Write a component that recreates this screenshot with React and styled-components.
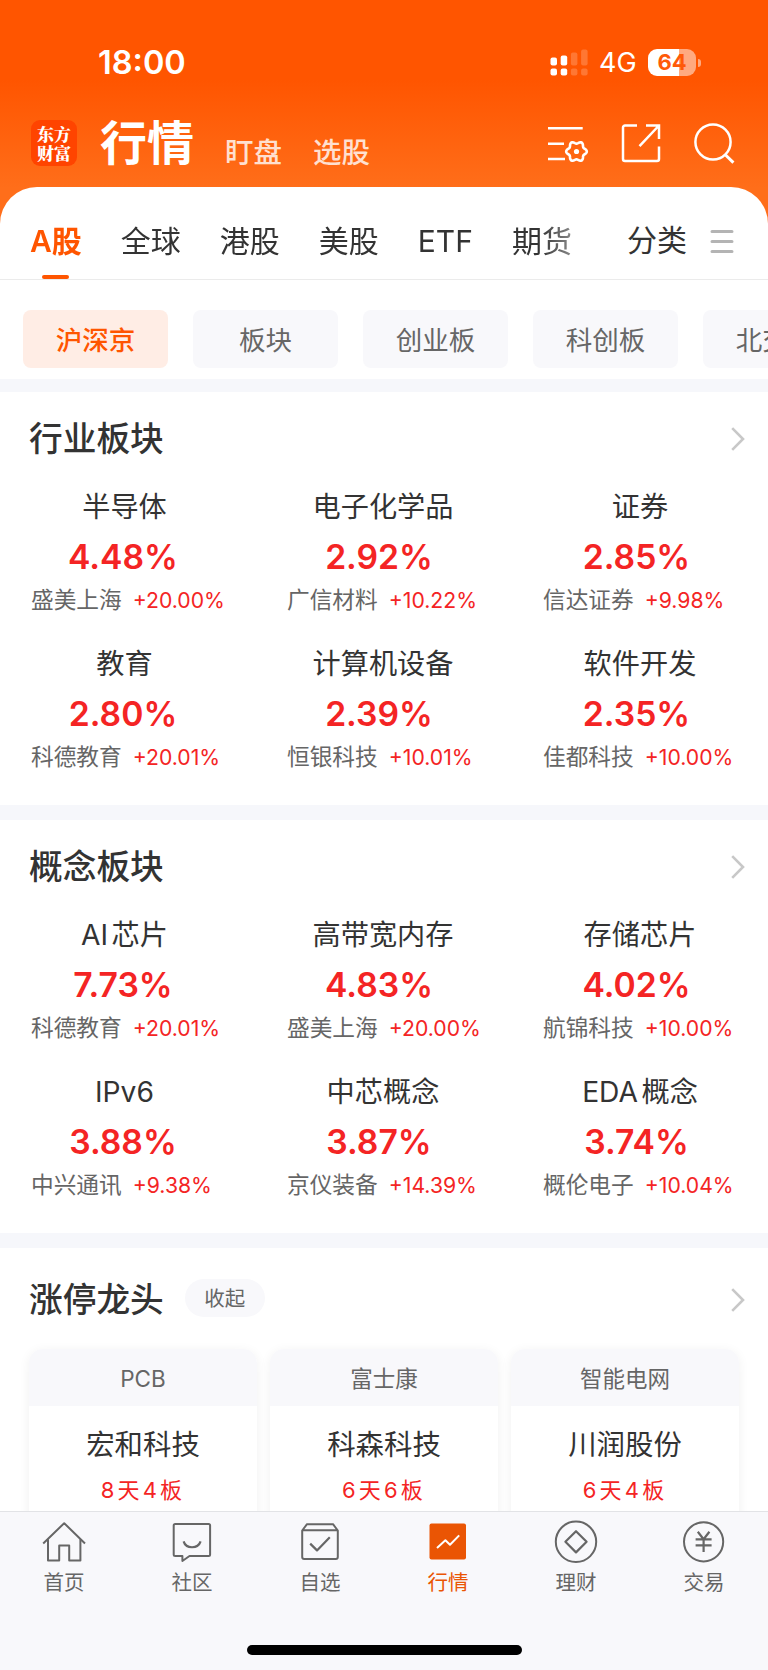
import styled, { createGlobalStyle } from "styled-components";

const industries = [
  { name: "半导体", pct: "4.48%", stock: "盛美上海", change: "+20.00%" },
  { name: "电子化学品", pct: "2.92%", stock: "广信材料", change: "+10.22%" },
  { name: "证券", pct: "2.85%", stock: "信达证券", change: "+9.98%" },
  { name: "教育", pct: "2.80%", stock: "科德教育", change: "+20.01%" },
  { name: "计算机设备", pct: "2.39%", stock: "恒银科技", change: "+10.01%" },
  { name: "软件开发", pct: "2.35%", stock: "佳都科技", change: "+10.00%" },
];

const concepts = [
  { name: "AI芯片", pct: "7.73%", stock: "科德教育", change: "+20.01%" },
  { name: "高带宽内存", pct: "4.83%", stock: "盛美上海", change: "+20.00%" },
  { name: "存储芯片", pct: "4.02%", stock: "航锦科技", change: "+10.00%" },
  { name: "IPv6", pct: "3.88%", stock: "中兴通讯", change: "+9.38%" },
  { name: "中芯概念", pct: "3.87%", stock: "京仪装备", change: "+14.39%" },
  { name: "EDA概念", pct: "3.74%", stock: "概伦电子", change: "+10.04%" },
];

const leaders = [
  { theme: "PCB", stock: "宏和科技", streak: "8天4板" },
  { theme: "富士康", stock: "科森科技", streak: "6天6板" },
  { theme: "智能电网", stock: "川润股份", streak: "6天4板" },
];

const markets = ["A股", "全球", "港股", "美股", "ETF", "期货"];
const boards = ["沪深京", "板块", "创业板", "科创板", "北交所"];

const SignalIcon = () => (
  <svg width="38" height="27" viewBox="0 0 38 27" fill="#fff">
    <rect x="0.5" y="8.5" width="6.5" height="8" rx="2" />
    <rect x="10.7" y="6.5" width="6.5" height="10" rx="2" />
    <rect x="20.9" y="3.5" width="6.5" height="13" rx="2" opacity="0.2" />
    <rect x="31.1" y="0.5" width="6.5" height="16" rx="2" opacity="0.2" />
    <rect x="0.5" y="19.5" width="6.5" height="7" rx="2" />
    <rect x="10.7" y="19.5" width="6.5" height="7" rx="2" />
    <rect x="20.9" y="19.5" width="6.5" height="7" rx="2" opacity="0.2" />
    <rect x="31.1" y="19.5" width="6.5" height="7" rx="2" opacity="0.2" />
  </svg>
);

// six-lobed gear outline
const gear = Array.from({ length: 72 }, (_, i) => {
  const a = (i * Math.PI) / 36;
  const r = 9.1 + 1.2 * Math.cos(6 * a);
  return `${(29.5 + r * Math.cos(a)).toFixed(2)} ${(29.5 + r * Math.sin(a)).toFixed(2)}`;
}).join("L");

const SettingsIcon = () => (
  <svg width="42" height="42" viewBox="0 0 42 42" fill="none" stroke="#fff" strokeWidth="2.6">
    <path d="M1 6.2h34.7M1 21.7h16M1 37h17" />
    <path strokeLinejoin="round" d={`M${gear}Z`} />
    <circle cx="29.5" cy="29.5" r="2.6" fill="#fff" stroke="none" />
  </svg>
);

const ShareIcon = () => (
  <svg width="40" height="40" viewBox="0 0 40 40" fill="none" stroke="#fff" strokeWidth="2.5">
    <path d="M16 2.6H4A2 2 0 0 0 2 4.6V36a2 2 0 0 0 2 2h32a2 2 0 0 0 2-2V23.5" />
    <path d="M25 2.6h13V16M37.5 3L18.5 23.2" />
  </svg>
);

const SearchIcon = () => (
  <svg width="42" height="42" viewBox="0 0 42 42" fill="none" stroke="#fff" strokeWidth="2.5">
    <circle cx="20" cy="20" r="17.6" />
    <path d="M31.8 32.2L40.4 40.6" strokeWidth="3" />
  </svg>
);

const Chevron = () => (
  <svg width="14" height="24" viewBox="0 0 14 24" fill="none" stroke="#c8c8c8" strokeWidth="2.6">
    <path d="M1.2 1.2L12 12L1.2 22.8" />
  </svg>
);

const MenuIcon = () => (
  <svg width="24" height="24" viewBox="0 0 24 24" stroke="#b4b4b4" strokeWidth="3" strokeLinecap="round">
    <path d="M2 1.6h20M2 11.5h20M2 21.4h20" />
  </svg>
);

const line = {
  width: 44,
  height: 44,
  viewBox: "0 0 44 44",
  fill: "none",
  stroke: "#666",
  strokeWidth: 2,
  strokeLinejoin: "round",
};

const navItems = [
  {
    label: "首页",
    icon: (
      <svg {...line}>
        <path d="M1.2 23.5L22.2 3.2L43 23.5" />
        <path d="M6 19.2V40.6H17.2V25.5H27.2V40.6H38.4V19.2" />
      </svg>
    ),
  },
  {
    label: "社区",
    icon: (
      <svg {...line}>
        <path d="M5.2 4h33.4a1.5 1.5 0 0 1 1.5 1.5v29a1.5 1.5 0 0 1-1.5 1.5H19.5L12.4 41V36H5.2a1.5 1.5 0 0 1-1.5-1.5V5.5A1.5 1.5 0 0 1 5.2 4Z" />
        <path d="M13.6 21.4C16 29.2 28 29.2 30.6 21.4" strokeWidth="2.2" />
      </svg>
    ),
  },
  {
    label: "自选",
    icon: (
      <svg {...line}>
        <path d="M4.2 10.5L9 4.2h26L39.8 10.5V37a2 2 0 0 1-2 2H6.2a2 2 0 0 1-2-2ZM4.6 10.3H39.4" />
        <path d="M12.2 23.6L19 30.4L31.8 17.2" strokeWidth="2.2" />
      </svg>
    ),
  },
  {
    label: "行情",
    active: true,
    icon: (
      <svg {...line}>
        <rect x="3.5" y="3.5" width="36.5" height="36" rx="2" fill="#ea5504" stroke="none" />
        <path d="M11 28L19.4 20.2L24 24.8L33.2 15.4" stroke="#fff" />
      </svg>
    ),
  },
  {
    label: "理财",
    icon: (
      <svg {...line}>
        <circle cx="22" cy="21.8" r="20.2" />
        <path d="M22 11.2L32.6 21.8L22 32.4L11.4 21.8Z" strokeWidth="2.2" />
      </svg>
    ),
  },
  {
    label: "交易",
    icon: (
      <svg {...line}>
        <circle cx="21.6" cy="21.8" r="19.6" />
        <path d="M15.8 11.8L21.6 19.2L27.4 11.8M13.6 19.4h16M13.6 25.4h16M21.6 19.2V32" strokeWidth="2.2" />
      </svg>
    ),
  },
];

const BoardSection = ({ title, items }) => (
  <Section>
    <SectionHeader>
      <SectionTitle>{title}</SectionTitle>
      <Chevron />
    </SectionHeader>
    <BoardGrid>
      {items.map((item) => (
        <BoardCell key={item.name}>
          <BoardName>{item.name}</BoardName>
          <BoardPct>{item.pct}</BoardPct>
          <BoardStock>
            {item.stock}
            <Change>{item.change}</Change>
          </BoardStock>
        </BoardCell>
      ))}
    </BoardGrid>
  </Section>
);

const App = () => {
  return (
    <>
      <GlobalStyle />
      <Screen>
        <Hero>
          <StatusBar>
            <Clock>18:00</Clock>
            <StatusRight>
              <SignalIcon />
              <Network>4G</Network>
              <Battery>64</Battery>
              <BatteryTip />
            </StatusRight>
          </StatusBar>
          <TitleBar>
            <Logo>东方财富</Logo>
            <PageTitle>行情</PageTitle>
            <PageLink>盯盘</PageLink>
            <PageLink>选股</PageLink>
            <Actions>
              <SettingsIcon />
              <ShareIcon />
              <SearchIcon />
            </Actions>
          </TitleBar>
        </Hero>

        <Sheet>
          <MarketBar>
            <MarketTabs>
              {markets.map((m, i) => (
                <MarketTab key={m} $active={i === 0}>
                  {m}
                </MarketTab>
              ))}
            </MarketTabs>
            <Category>分类</Category>
            <MenuIcon />
          </MarketBar>
          <Chips>
            {boards.map((b, i) => (
              <Chip key={b} $active={i === 0}>
                {b}
              </Chip>
            ))}
          </Chips>
          <Band $size={13} />
          <BoardSection title="行业板块" items={industries} />
          <Band $size={15} />
          <BoardSection title="概念板块" items={concepts} />
          <Band $size={15} />

          {/* Limit-up leaders */}
          <Section>
            <SectionHeader $tall>
              <SectionTitle>涨停龙头</SectionTitle>
              <Pill>收起</Pill>
              <Chevron />
            </SectionHeader>
            <Cards>
              {leaders.map((l) => (
                <Card key={l.stock}>
                  <CardHead>{l.theme}</CardHead>
                  <CardStock>{l.stock}</CardStock>
                  <CardStreak>{l.streak}</CardStreak>
                </Card>
              ))}
            </Cards>
          </Section>
        </Sheet>

        <BottomBar>
          <Nav>
            {navItems.map((n) => (
              <NavItem key={n.label} $active={n.active}>
                {n.icon}
                {n.label}
              </NavItem>
            ))}
          </Nav>
          <HomeIndicator />
        </BottomBar>
      </Screen>
    </>
  );
};

const GlobalStyle = createGlobalStyle`
  * {
    box-sizing: border-box;
  }
  body {
    margin: 0;
    font-family: Inter, "Noto Sans CJK SC", sans-serif;
    color: #333;
    background: #fff;
  }
  svg {
    display: block;
    flex-shrink: 0;
  }
`;

const Screen = styled.div`
  width: 768px;
  height: 1670px;
  display: flex;
  flex-direction: column;
  overflow: hidden;
  background: linear-gradient(#ff5500 80px, #ff6e1a 188px);
`;

const Hero = styled.header`
  height: 187px;
  flex-shrink: 0;
  color: #fff;
`;

const StatusBar = styled.div`
  height: 101px;
  padding: 43px 67px 0 98px;
  display: flex;
  justify-content: space-between;
`;

const Clock = styled.div`
  font-size: 32.5px;
  font-weight: 600;
  line-height: 40px;
`;

const StatusRight = styled.div`
  height: 39px;
  display: flex;
  align-items: center;
`;

const Network = styled.span`
  margin-left: 11px;
  width: 37px;
  font-size: 27px;
  line-height: 30px;
`;

const Battery = styled.span`
  margin-left: 12px;
  width: 48px;
  height: 27px;
  border-radius: 9px;
  background: linear-gradient(to right, #fff 31px, #ffaa80 31px);
  color: #ff5a08;
  font-size: 22px;
  font-weight: 700;
  line-height: 27px;
  text-align: center;
`;

const BatteryTip = styled.span`
  margin-left: 2px;
  width: 3px;
  height: 8px;
  border-radius: 0 4px 4px 0;
  background: #ffaa80;
`;

const TitleBar = styled.div`
  height: 84px;
  padding: 0 33px 0 31px;
  display: flex;
  align-items: center;
`;

const Logo = styled.div`
  width: 46px;
  height: 46px;
  padding: 4px 6px;
  border-radius: 9px;
  background: #ff4400;
  font-family: "Noto Serif CJK SC", "Noto Sans CJK SC", sans-serif;
  font-size: 17px;
  font-weight: 900;
  line-height: 19px;
`;

const PageTitle = styled.h1`
  margin: 0 0 0 23px;
  font-size: 47px;
  font-weight: 700;
  line-height: 60px;
`;

const PageLink = styled.span`
  margin: 19px 0 0 31px;
  font-size: 28.5px;
  font-weight: 500;
  line-height: 36px;
  color: #ffe0d0;
`;

const Actions = styled.div`
  margin-left: auto;
  display: flex;
  align-items: center;
  gap: 32px;
`;

const Sheet = styled.main`
  flex: 1;
  min-height: 0;
  overflow: hidden;
  background: #fff;
  border-radius: 37px 37px 0 0;
`;

const MarketBar = styled.div`
  height: 93px;
  padding: 17px 34px 0 30px;
  display: flex;
  align-items: center;
  border-bottom: 1px solid #ebebeb;
`;

const MarketTabs = styled.div`
  flex: 1;
  display: flex;
  gap: 39px;
  mask-image: linear-gradient(to right, #000 510px, transparent 585px);
`;

const MarketTab = styled.div`
  height: 75px;
  display: flex;
  flex-direction: column;
  align-items: center;
  font-size: 30px;
  font-weight: ${({ $active }) => ($active ? 600 : 400)};
  line-height: 75px;
  white-space: nowrap;
  color: ${({ $active }) => ($active ? "#ff5500" : "#333")};

  &::after {
    content: "";
    width: 27px;
    height: 4px;
    margin-top: -4px;
    flex-shrink: 0;
    border-radius: 2px;
    background: ${({ $active }) => ($active ? "#ff5500" : "transparent")};
  }
`;

const Category = styled.div`
  margin-right: 23px;
  font-size: 30px;
  line-height: 40px;
  padding-bottom: 3px;
`;

const Chips = styled.div`
  height: 99px;
  padding: 30px 0 0 23px;
  display: flex;
  gap: 25px;
`;

const Chip = styled.div`
  width: 145px;
  height: 58px;
  flex-shrink: 0;
  border-radius: 8px;
  background: ${({ $active }) => ($active ? "#ffede5" : "#f8f8fb")};
  color: ${({ $active }) => ($active ? "#ff5500" : "#666")};
  font-size: 26.5px;
  font-weight: ${({ $active }) => ($active ? 500 : 400)};
  line-height: 60px;
  text-align: center;
`;

const Band = styled.div`
  height: ${({ $size }) => $size}px;
  background: #f6f7fb;
`;

const Section = styled.section`
  height: 413px;
`;

const SectionHeader = styled.div`
  height: ${({ $tall }) => ($tall ? 101 : 97)}px;
  padding: ${({ $tall }) => ($tall ? "2px 23px 0 29px" : "0 23px 3px 29px")};
  display: flex;
  align-items: center;

  svg {
    margin-left: auto;
  }
`;

const SectionTitle = styled.h2`
  margin: 0;
  font-size: 33.7px;
  font-weight: 500;
  line-height: 40px;
`;

const BoardGrid = styled.div`
  display: grid;
  grid-template-columns: repeat(3, 256px);
  grid-auto-rows: 156.5px;
`;

const BoardName = styled.div`
  font-size: 28.2px;
  line-height: 37px;
  text-align: center;
  text-autospace: normal;
`;

const BoardPct = styled.div`
  margin-top: 9px;
  padding-right: 10px;
  font-size: 33.7px;
  font-weight: 600;
  line-height: 44px;
  text-align: center;
  color: #f42424;
`;

const BoardCell = styled.div`
  &:nth-child(3n + 1) ${BoardName} {
    padding-right: 7px;
  }
  &:nth-child(3n + 2) ${BoardName} {
    padding-right: 2px;
  }
  &:nth-child(3n) ${BoardPct} {
    padding-right: 7px;
  }
`;

const BoardStock = styled.div`
  margin-top: 6px;
  padding-left: 31px;
  font-size: 22.7px;
  line-height: 30px;
  white-space: nowrap;
  color: #666;
`;

const Change = styled.span`
  margin-left: 11px;
  font-size: 21.2px;
  color: #f42424;
`;

const Pill = styled.span`
  margin: 0 0 4px 21px;
  width: 80px;
  height: 38px;
  border-radius: 19px;
  background: #f8f8fb;
  font-size: 20.5px;
  line-height: 39px;
  text-align: center;
  color: #666;
`;

const Cards = styled.div`
  padding: 0 29px;
  display: grid;
  grid-template-columns: repeat(3, 228px);
  gap: 13px;
`;

const Card = styled.div`
  height: 230px;
  border-radius: 14px;
  overflow: hidden;
  background: #fff;
  box-shadow: 0 2px 12px rgba(0, 0, 0, 0.06);
  text-align: center;
`;

const CardHead = styled.div`
  height: 57px;
  background: #f8f8fb;
  font-size: 22.5px;
  line-height: 59px;
  color: #666;
`;

const CardStock = styled.div`
  margin-top: 19px;
  font-size: 28.4px;
  line-height: 40px;
`;

const CardStreak = styled.div`
  margin-top: 10px;
  font-size: 22px;
  line-height: 30px;
  letter-spacing: 3.2px;
  color: #f42424;
`;

const BottomBar = styled.footer`
  height: 159px;
  flex-shrink: 0;
  position: relative;
  border-top: 1px solid #e2e3e6;
  background: #f8f8fb;
`;

const Nav = styled.nav`
  padding-top: 8px;
  display: grid;
  grid-template-columns: repeat(6, 128px);
`;

const NavItem = styled.div`
  display: flex;
  flex-direction: column;
  align-items: center;
  gap: 3px;
  font-size: 20.5px;
  line-height: 31px;
  color: ${({ $active }) => ($active ? "#ea5504" : "#666")};
`;

const HomeIndicator = styled.div`
  position: absolute;
  left: 247px;
  bottom: 15px;
  width: 275px;
  height: 10px;
  border-radius: 5px;
  background: #000;
`;

export default App;
